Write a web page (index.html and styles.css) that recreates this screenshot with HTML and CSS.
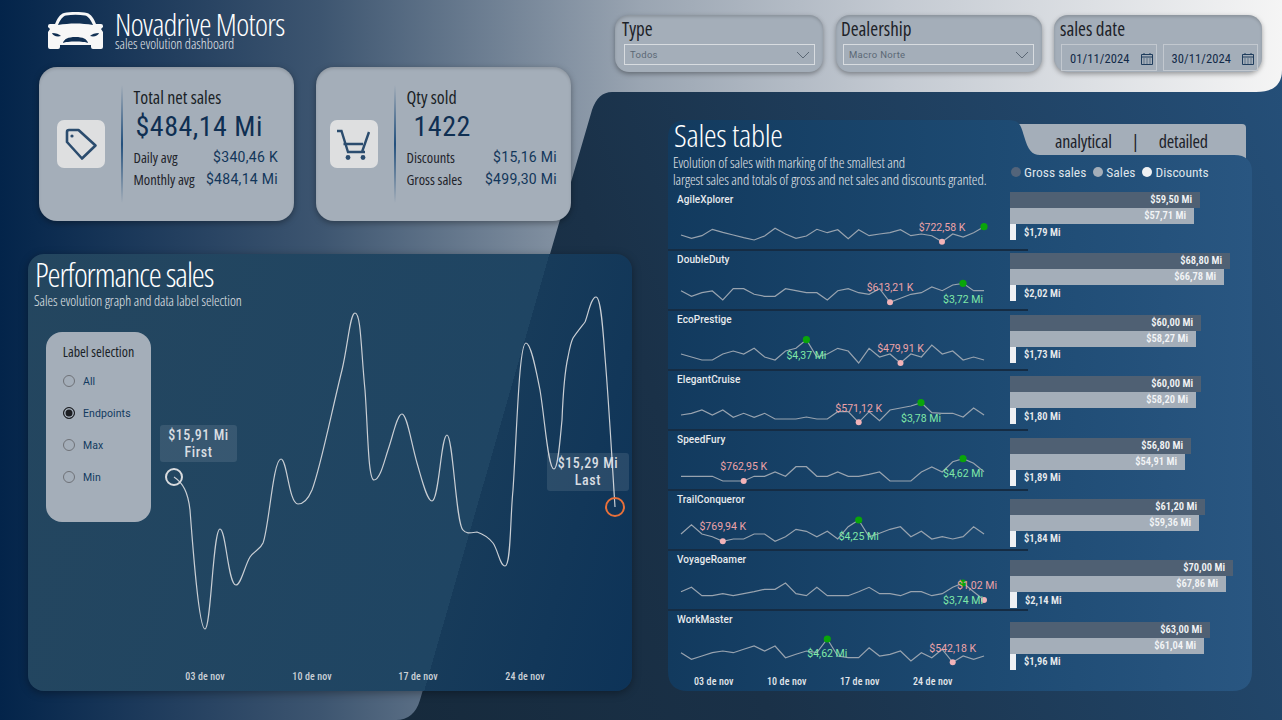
FILE: index.html
```html
<!DOCTYPE html>
<html lang="en">
<head>
  <meta charset="UTF-8">
  <title>Novadrive Motors</title>
  <link rel="stylesheet" href="styles.css">
</head>
<body>
<div class="page">
  <!-- light backdrop with the slanted edge -->
  <svg class="backdrop" width="1282" height="720" viewBox="0 0 1282 720">
    <defs>
      <linearGradient id="lightGrad" x1="0" y1="0" x2="1" y2="0">
        <stop offset="0" stop-color="#03244a"/>
        <stop offset="0.25" stop-color="#3d5570"/>
        <stop offset="0.5" stop-color="#9aa5b2"/>
        <stop offset="0.7" stop-color="#c4cad2"/>
        <stop offset="1" stop-color="#f5f5f5"/>
      </linearGradient>
    </defs>
    <path fill="url(#lightGrad)" d="M0,0 H1282 V70 Q1282,92 1256,92 H612 Q598,92 592,110 L420,700 Q414,720 396,720 H0 Z"/>
  </svg>

  <div class="left">
    <header class="brand">
      <svg class="car" width="55" height="37" viewBox="0 0 55 37">
        <path fill="#f7f7f7" fill-rule="evenodd" d="M16,1 C22,-0.3 33,-0.3 39,1 C43,2 46,7 48,12 L53,12 Q55,12 55,14 V15 L53,17 L55,20 V35 Q55,37 53,37 H45 Q43,37 43,35 V33 H12 V35 Q12,37 10,37 H2 Q0,37 0,35 V20 L2,17 L0,15 V14 Q0,12 2,12 L7,12 C9,7 12,2 16,1 Z M10,13 C12,8 15,4 18,3.5 C24,2.5 31,2.5 37,3.5 C40,4 43,8 45,13 C33,11 22,11 10,13 Z M4,21 C8,21 11,22 13,24 C9,25 5,24 4,21 Z M51,21 C47,21 44,22 42,24 C46,25 50,24 51,21 Z M15,31 C16,27 20,25 27.5,25 C35,25 39,27 40,31 C36,29 19,29 15,31 Z"/>
      </svg>
      <div>
        <h1 class="brand-name">Novadrive Motors</h1>
        <p class="brand-sub">sales evolution dashboard</p>
      </div>
    </header>

    <section class="kpis">
      <div class="kpi">
        <div class="tile tile-tag">
          <svg width="48" height="48" viewBox="0 0 48 48" fill="none" stroke="#2b4c6e" stroke-width="2.6" stroke-linejoin="round">
            <path d="M12,10 H21.5 L38.5,25.5 L25,38.5 L10,22 V12 Q10,10 12,10 Z"/>
            <circle cx="15" cy="16" r="1.6" fill="#2b4c6e" stroke="none"/>
          </svg>
        </div>
        <div class="rule"></div>
        <div class="kpi-text">
          <div class="kpi-title">Total net sales</div>
          <div class="kpi-big">$484,14 Mi</div>
          <div class="kpi-row"><span>Daily avg</span><b>$340,46 K</b></div>
          <div class="kpi-row"><span>Monthly avg</span><b>$484,14 Mi</b></div>
        </div>
      </div>
      <div class="kpi kpi-qty">
        <div class="tile">
          <svg width="48" height="48" viewBox="0 0 48 48" fill="none" stroke="#2b4c6e" stroke-width="2.4">
            <path d="M7,11 H11.5 L18,32 H35 M13.5,24 H33 M39,12 L32,32"/>
            <circle cx="18" cy="37.5" r="2.4" fill="#2b4c6e" stroke="none"/>
            <circle cx="33" cy="37.5" r="2.4" fill="#2b4c6e" stroke="none"/>
          </svg>
        </div>
        <div class="rule"></div>
        <div class="kpi-text">
          <div class="kpi-title">Qty sold</div>
          <div class="kpi-big kpi-big-indent">1422</div>
          <div class="kpi-row"><span>Discounts</span><b>$15,16 Mi</b></div>
          <div class="kpi-row"><span>Gross sales</span><b>$499,30 Mi</b></div>
        </div>
      </div>
    </section>

    <section class="perf">
      <h2 class="perf-title">Performance sales</h2>
      <p class="perf-sub">Sales evolution graph and data label selection</p>
      <div class="perf-body">
        <div class="label-card">
          <div class="label-head">Label selection</div>
          <div class="radio"><i></i>All</div>
          <div class="radio checked"><i></i>Endpoints</div>
          <div class="radio"><i></i>Max</div>
          <div class="radio"><i></i>Min</div>
        </div>
        <div class="chart">
          <svg class="chart-svg" width="476" height="383" viewBox="156 308 476 383">
            <path class="chart-line" d="M174,477 C183,483 188,492 190,510 C193,550 199,629 205,629 C211,629 213,529 220,529 C226,529 228,585 236,585 C241,585 245,565 250,557 C255,550 260,550 263,543 C269,528 273,459 281,459 C287,459 289,504 298,504 C304,504 309,497 312,490 C320,470 332,410 342,370 C348,345 350,313 355,313 C361,313 361,350 365,390 C368,430 368,480 374,480 C380,480 384,462 388,450 C393,436 397,414 402,414 C407,414 411,442 417,463 C422,480 427,501 432,501 C439,501 441,435 447,435 C453,435 456,525 463,530 C466,534 470,533 477,532 C483,534 489,538 493,543 C498,550 500,566 505,566 C511,566 510,520 513,490 C517,430 519,343 526,343 C531,343 536,370 540,390 C545,420 548,469 554,469 C558,469 560,440 562,420 C563,395 565,370 568,357 C570,346 571,342 573,338 C577,332 582,326 585,322 C588,315 591,297 596,297 C601,297 603,330 605,357 C609,405 612,460 615,507"/>
            <circle class="end-first" cx="174" cy="477" r="8"/>
            <circle class="end-last" cx="615" cy="507" r="9"/>
            <text class="chart-date" x="205" y="680">03 de nov</text>
            <text class="chart-date" x="312" y="680">10 de nov</text>
            <text class="chart-date" x="418" y="680">17 de nov</text>
            <text class="chart-date" x="525" y="680">24 de nov</text>
          </svg>
          <div class="point-label point-first">$15,91 Mi<br>First</div>
          <div class="point-label point-last">$15,29 Mi<br>Last</div>
        </div>
      </div>
    </section>
  </div>

  <div class="right">
    <section class="filters">
      <div class="filter filter-type">
        <div class="filter-name">Type</div>
        <div class="select">Todos<svg width="14" height="8" viewBox="0 0 14 8"><polyline points="1,1 7,7 13,1"/></svg></div>
      </div>
      <div class="filter filter-dealer">
        <div class="filter-name">Dealership</div>
        <div class="select">Macro Norte<svg width="14" height="8" viewBox="0 0 14 8"><polyline points="1,1 7,7 13,1"/></svg></div>
      </div>
      <div class="filter filter-date">
        <div class="filter-name">sales date</div>
        <div class="dates">
          <div class="date">01/11/2024<svg width="12" height="12" viewBox="0 0 12 12"><path class="cal" d="M0.5,1.5 H11.5 V11.5 H0.5 Z M0.5,4 H11.5 M2.5,6 H3.5 M5.5,6 H6.5 M8.5,6 H9.5 M2.5,8 H3.5 M5.5,8 H6.5 M8.5,8 H9.5 M2.5,10 H3.5 M5.5,10 H6.5 M8.5,10 H9.5 M3,0 V2 M9,0 V2"/></svg></div>
          <div class="date">30/11/2024<svg width="12" height="12" viewBox="0 0 12 12"><path class="cal" d="M0.5,1.5 H11.5 V11.5 H0.5 Z M0.5,4 H11.5 M2.5,6 H3.5 M5.5,6 H6.5 M8.5,6 H9.5 M2.5,8 H3.5 M5.5,8 H6.5 M8.5,8 H9.5 M2.5,10 H3.5 M5.5,10 H6.5 M8.5,10 H9.5 M3,0 V2 M9,0 V2"/></svg></div>
        </div>
      </div>
    </section>

    <section class="sales-wrap">
      <div class="sales-tab"><span>analytical</span><span>|</span><span>detailed</span></div>
      <div class="sales">
        <div class="sales-head">
          <div class="sales-intro">
            <h2 class="sales-title">Sales table</h2>
            <p class="sales-sub">Evolution of sales with marking of the smallest and<br>largest sales and totals of gross and net sales and discounts granted.</p>
          </div>
          <div class="legend">
            <span class="legend-item"><i class="dot dot-gross"></i>Gross sales</span>
            <span class="legend-item"><i class="dot dot-net"></i>Sales</span>
            <span class="legend-item"><i class="dot dot-disc"></i>Discounts</span>
          </div>
        </div>
        <div class="sales-body">
          <div class="sparks">
            <div class="spark-row">
              <div class="spark-name">AgileXplorer</div>
              <svg class="spark" width="305" height="38" viewBox="0 23 305 38">
                <polyline class="spark-line" transform="scale(10.45 1)" points="0,45 1,48.3 2,45.7 3,39.3 4,42.3 5,45 6,47.7 7,50 8,46 9,38.3 10,44 11,48.3 12,46 13,39.3 14,42.7 15,39.7 16,48.7 17,39.7 18,45.7 19,44 20,42.7 21,39.7 22,45.7 23,44 24,45.7 25,51.7 26,44 27,47 28,42.7 29,36.7"/>
                <circle class="mark-min" cx="261" cy="51.7" r="3"/><circle class="mark-max" cx="303" cy="36.7" r="3.6"/>
                <text class="lab-min" x="261" y="41">$722,58 K</text>
              </svg>
            </div>
            <div class="spark-row">
              <div class="spark-name">DoubleDuty</div>
              <svg class="spark" width="305" height="38" viewBox="0 23 305 38">
                <polyline class="spark-line" transform="scale(10.45 1)" points="0,40.7 1,46.3 2,42.7 3,41 4,50 5,38.7 6,38.7 7,44.3 8,46.3 9,46.3 10,38.7 11,40.7 12,42.7 13,42.7 14,50 15,40.7 16,38.7 17,42.7 18,44.3 19,38.7 20,52.3 21,48.3 22,44.3 23,42.7 24,37 25,40.7 26,35 27,33.3 28,40.7 29,40.7"/>
                <circle class="mark-min" cx="209" cy="52.3" r="3"/><circle class="mark-max" cx="282" cy="33.3" r="3.6"/>
                <text class="lab-min" x="209" y="41.4">$613,21 K</text><text class="lab-max" x="282" y="53.4">$3,72 Mi</text>
              </svg>
            </div>
            <div class="spark-row">
              <div class="spark-name">EcoPrestige</div>
              <svg class="spark" width="305" height="38" viewBox="0 23 305 38">
                <polyline class="spark-line" transform="scale(10.45 1)" points="0,44 1,47 2,50 3,50 4,44 5,41 6,44 7,38.3 8,47 9,50 10,41 11,38.3 12,29.7 13,47 14,44 15,38.3 16,41 17,53 18,38.3 19,47 20,44 21,53 22,44 23,47 24,35 25,44 26,41 27,50 28,47 29,50"/>
                <circle class="mark-min" cx="219.5" cy="53" r="3"/><circle class="mark-max" cx="125.4" cy="29.7" r="3.6"/>
                <text class="lab-min" x="219.5" y="42.4">$479,91 K</text><text class="lab-max" x="125.4" y="49.4">$4,37 Mi</text>
              </svg>
            </div>
            <div class="spark-row">
              <div class="spark-name">ElegantCruise</div>
              <svg class="spark" width="305" height="38" viewBox="0 23 305 38">
                <polyline class="spark-line" transform="scale(10.45 1)" points="0,45 1,43.3 2,40 3,45 4,40 5,47.3 6,43.3 7,47.3 8,43.3 9,49 10,49 11,49 12,47 13,49 14,49 15,41.7 16,41.7 17,52.3 18,41.7 19,50.7 20,40 21,38 22,36 23,32.7 24,42.7 25,43.3 26,43.3 27,47 28,38 29,45"/>
                <circle class="mark-min" cx="177.7" cy="52.3" r="3"/><circle class="mark-max" cx="240" cy="32.7" r="3.6"/>
                <text class="lab-min" x="177.7" y="42">$571,12 K</text><text class="lab-max" x="240" y="52.4">$3,78 Mi</text>
              </svg>
            </div>
            <div class="spark-row">
              <div class="spark-name">SpeedFury</div>
              <svg class="spark" width="305" height="38" viewBox="0 23 305 38">
                <polyline class="spark-line" transform="scale(10.45 1)" points="0,46.3 1,46.3 2,46.3 3,46.3 4,51 5,51 6,51 7,46.3 8,46.3 9,42 10,46.3 11,36.7 12,36.7 13,46.3 14,46.3 15,42 16,46.3 17,46.3 18,44.3 19,42 20,51 21,51 22,51 23,42 24,37 25,42 26,31.7 27,28.7 28,33.3 29,41.7"/>
                <circle class="mark-min" cx="62.7" cy="51" r="3"/><circle class="mark-max" cx="282" cy="28.7" r="3.6"/>
                <text class="lab-min" x="62.7" y="40">$762,95 K</text><text class="lab-max" x="282" y="47.4">$4,62 Mi</text>
              </svg>
            </div>
            <div class="spark-row">
              <div class="spark-name">TrailConqueror</div>
              <svg class="spark" width="305" height="38" viewBox="0 23 305 38">
                <polyline class="spark-line" transform="scale(10.45 1)" points="0,44 1,34.7 2,44 3,46.7 4,51.3 5,49 6,49 7,44 8,44 9,51.3 10,46.7 11,39.3 12,41.3 13,46.7 14,41.3 15,49 16,36.7 17,30 18,46.7 19,43.3 20,39.3 21,36.7 22,46.7 23,41.3 24,49 25,46.7 26,49 27,46.7 28,36.7 29,44"/>
                <circle class="mark-min" cx="41.8" cy="51.3" r="3"/><circle class="mark-max" cx="177.7" cy="30" r="3.6"/>
                <text class="lab-min" x="41.8" y="40.4">$769,94 K</text><text class="lab-max" x="177.7" y="50.4">$4,25 Mi</text>
              </svg>
            </div>
            <div class="spark-row">
              <div class="spark-name">VoyageRoamer</div>
              <svg class="spark" width="305" height="38" viewBox="0 23 305 38">
                <polyline class="spark-line" transform="scale(10.45 1)" points="0,41.7 1,37.3 2,45.7 3,45.7 4,43.7 5,45.7 6,43.7 7,41.7 8,39.3 9,39.3 10,33 11,43.7 12,45.7 13,37.3 14,45.7 15,45.7 16,45.7 17,41.7 18,37.3 19,43.7 20,43.7 21,45.7 22,41.7 23,41.7 24,45.7 25,43.7 26,37.3 27,33 28,41.7 29,50"/>
                <circle class="mark-min" cx="303" cy="50" r="3"/><circle class="mark-max" cx="282" cy="33" r="3.6"/>
                <text class="lab-min" x="296" y="39.4">$1,02 Mi</text><text class="lab-max" x="282" y="53.7">$3,74 Mi</text>
              </svg>
            </div>
            <div class="spark-row">
              <div class="spark-name">WorkMaster</div>
              <svg class="spark" width="305" height="38" viewBox="0 23 305 38">
                <polyline class="spark-line" transform="scale(10.45 1)" points="0,42.7 1,49.3 2,46 3,42.7 4,41 5,42.7 6,39.3 7,36 8,41 9,36 10,47.7 11,44.3 12,41 13,42.7 14,29 15,46 16,47.7 17,47.7 18,37.7 19,46 20,44.3 21,41 22,51 23,42.7 24,47.7 25,39.3 26,52.3 27,46 28,49.3 29,46"/>
                <circle class="mark-min" cx="271.7" cy="52.3" r="3"/><circle class="mark-max" cx="146.3" cy="29" r="3.6"/>
                <text class="lab-min" x="271.7" y="42.4">$542,18 K</text><text class="lab-max" x="146.3" y="47.4">$4,62 Mi</text>
              </svg>
            </div>
            <div class="spark-axis"><span>03 de nov</span><span>10 de nov</span><span>17 de nov</span><span>24 de nov</span></div>
          </div>

          <div class="bars">
            <div class="bar-group">
              <div class="bar bar-gross" style="width:190px">$59,50 Mi</div>
              <div class="bar bar-net" style="width:184px">$57,71 Mi</div>
              <div class="bar-disc"><i style="width:6px"></i>$1,79 Mi</div>
            </div>
            <div class="bar-group">
              <div class="bar bar-gross" style="width:220px">$68,80 Mi</div>
              <div class="bar bar-net" style="width:214px">$66,78 Mi</div>
              <div class="bar-disc"><i style="width:6px"></i>$2,02 Mi</div>
            </div>
            <div class="bar-group">
              <div class="bar bar-gross" style="width:191px">$60,00 Mi</div>
              <div class="bar bar-net" style="width:186px">$58,27 Mi</div>
              <div class="bar-disc"><i style="width:6px"></i>$1,73 Mi</div>
            </div>
            <div class="bar-group">
              <div class="bar bar-gross" style="width:191px">$60,00 Mi</div>
              <div class="bar bar-net" style="width:186px">$58,20 Mi</div>
              <div class="bar-disc"><i style="width:6px"></i>$1,80 Mi</div>
            </div>
            <div class="bar-group">
              <div class="bar bar-gross" style="width:181px">$56,80 Mi</div>
              <div class="bar bar-net" style="width:175px">$54,91 Mi</div>
              <div class="bar-disc"><i style="width:6px"></i>$1,89 Mi</div>
            </div>
            <div class="bar-group">
              <div class="bar bar-gross" style="width:195px">$61,20 Mi</div>
              <div class="bar bar-net" style="width:189px">$59,36 Mi</div>
              <div class="bar-disc"><i style="width:6px"></i>$1,84 Mi</div>
            </div>
            <div class="bar-group">
              <div class="bar bar-gross" style="width:223px">$70,00 Mi</div>
              <div class="bar bar-net" style="width:216px">$67,86 Mi</div>
              <div class="bar-disc"><i style="width:7px"></i>$2,14 Mi</div>
            </div>
            <div class="bar-group">
              <div class="bar bar-gross" style="width:200px">$63,00 Mi</div>
              <div class="bar bar-net" style="width:194px">$61,04 Mi</div>
              <div class="bar-disc"><i style="width:6px"></i>$1,96 Mi</div>
            </div>
          </div>
        </div>
      </div>
    </section>
  </div>
</div>
</body>
</html>
```
FILE: styles.css
```css
* { box-sizing: border-box; }
body {
  margin: 0;
  font-family: Roboto, "Liberation Sans", sans-serif;
}
h1, h2, p { margin: 0; font-weight: 300; }

.page {
  position: relative;
  width: 1282px;
  height: 720px;
  overflow: hidden;
  display: flex;
  background: linear-gradient(70deg, #12222f 0%, #1a3148 50%, #25507a 100%);
}
.backdrop { position: absolute; left: 0; top: 0; }
.left, .right { position: relative; }

/* condensed titles */
.brand-name, .brand-sub, .kpi-title, .kpi-row span, .perf-title, .perf-sub,
.label-head, .filter-name, .sales-title, .sales-sub, .sales-tab {
  font-family: "Open Sans", sans-serif;
  font-stretch: 75%;
  font-weight: 300;
}

/* left column */
.left { width: 632px; padding: 12px 0 0 28px; }
.brand { display: flex; gap: 12px; margin-left: 20px; height: 38px; }
.brand-name {
  font-size: 31px;
  line-height: 24px;
  letter-spacing: -0.65px;
  color: #fff;
}
.brand-sub {
  font-size: 14px;
  line-height: 12px;
  margin-top: 2px;
  color: #e4e8ec;
}

.kpis { display: flex; gap: 22px; margin: 17px 0 0 11px; }
.kpi {
  display: flex;
  width: 255px;
  height: 154px;
  padding: 18px 16px 0 18px;
  background: #a4aeb9;
  border-radius: 18px;
  box-shadow: 0 2px 6px rgba(0, 0, 0, 0.35), inset 0 2px 3px rgba(0, 0, 0, 0.12);
}
.kpi-qty { padding-left: 14px; padding-right: 14px; }
.tile {
  width: 48px;
  height: 48px;
  margin-top: 35px;
  background: #dedfe0;
  border-radius: 7px;
}
.tile svg { display: block; }
.rule {
  width: 1.5px;
  height: 118px;
  margin: 0 11px 0 16px;
  background: linear-gradient(180deg, rgba(35, 80, 125, 0), #23507d 50%, rgba(35, 80, 125, 0));
}
.kpi-text { flex: 1; margin-top: 1px; }
.kpi-title { font-size: 18px; line-height: 22px; font-weight: 400; color: #1a1f26; }
.kpi-big {
  font-size: 28px;
  font-stretch: 85%;
  line-height: 36px;
  margin: 1px 0 1px 2px;
  letter-spacing: 0.5px;
  color: #0f2f52;
}
.kpi-big-indent { margin-left: 7px; }
.kpi-row {
  display: flex;
  justify-content: space-between;
  align-items: center;
  height: 22px;
}
.kpi-row span { font-size: 14.5px; font-weight: 400; color: #1f242b; }
.kpi-row b { font-size: 14px; font-weight: 400; letter-spacing: 0.3px; color: #12365a; }

.perf {
  width: 604px;
  height: 437px;
  margin-top: 33px;
  padding: 2px 0 0 7px;
  border-radius: 16px;
  background: linear-gradient(106deg, #24465f 0%, #1f4563 71.5%, #173b5a 71.5%, #0d3358 100%);
  box-shadow: 0 2px 8px rgba(0, 0, 0, 0.35);
}
.perf-title { font-size: 33px; line-height: 38px; letter-spacing: -1.1px; color: #fff; }
.perf-sub { font-size: 14px; line-height: 14px; margin-left: -1px; color: #e2e6ea; }
.perf-body { display: flex; margin-left: -7px; padding-left: 18px; }
.label-card {
  width: 105px;
  height: 190px;
  margin-top: 24px;
  padding-top: 10px;
  background: #a4aeb9;
  border-radius: 16px;
}
.label-head {
  text-align: center;
  font-size: 14px;
  line-height: 20px;
  font-weight: 400;
  color: #1a1f26;
  margin-bottom: 3px;
}
.radio {
  display: flex;
  align-items: center;
  gap: 8px;
  height: 32px;
  padding-left: 17px;
  font-size: 10.5px;
  letter-spacing: 0.1px;
  color: #123a60;
}
.radio i {
  width: 12px;
  height: 12px;
  border: 1px solid #6f7278;
  border-radius: 50%;
}
.radio.checked i {
  background: #1c1e22;
  border-color: #1c1e22;
  box-shadow: inset 0 0 0 1.5px #a4aeb9;
}
.chart { position: relative; width: 476px; height: 383px; margin-left: 5px; }
.chart-svg { display: block; overflow: visible; }
.chart-line { fill: none; stroke: #c9ced4; stroke-width: 1.2; }
.end-first { fill: none; stroke: #d9dbde; stroke-width: 2; }
.end-last { fill: none; stroke: #e8703a; stroke-width: 2; }
.chart-date {
  font-size: 10px;
  font-stretch: 85%;
  font-weight: 500;
  letter-spacing: 0.1px;
  text-anchor: middle;
  fill: #ccd1d7;
}
.point-label {
  position: absolute;
  text-align: center;
  font-size: 14px;
  font-weight: 500;
  font-stretch: 85%;
  line-height: 17px;
  letter-spacing: 0.6px;
  color: #d8dde2;
  padding-top: 2px;
  border-radius: 3px;
  background: rgba(255, 255, 255, 0.1);
}
.point-first { left: 4px; top: 117px; width: 77px; height: 37px; }
.point-last { left: 391px; top: 145px; width: 82px; height: 38px; }

/* right column */
.right { width: 650px; padding-top: 15px; }
.filters { display: flex; margin-left: -17px; }
.filter {
  height: 57px;
  background: #a4aeb9;
  border-radius: 14px;
  box-shadow: 0 2px 5px rgba(0, 0, 0, 0.35), inset 0 2px 3px rgba(0, 0, 0, 0.15);
}
.filter-type { width: 208px; padding: 0 8px 0 7px; }
.filter-dealer { width: 206px; margin-left: 13px; padding: 0 8px 0 5px; }
.filter-date { width: 208px; margin-left: 12px; padding: 0 4px 0 6px; }
.filter-name { font-size: 19px; line-height: 28px; font-weight: 400; color: #1d2228; }
.select {
  display: flex;
  justify-content: space-between;
  align-items: center;
  height: 21px;
  margin: 1px 0 0 2px;
  padding: 0 4px 0 5px;
  border: 1.5px solid #d8dce0;
  font-size: 9.5px;
  letter-spacing: 0.3px;
  color: #5b6875;
}
.select polyline { fill: none; stroke: #5b6875; stroke-width: 1; }
.dates { display: flex; gap: 6px; margin-top: 1px; margin-left: 1px; }
.date {
  display: flex;
  justify-content: space-between;
  align-items: center;
  width: 96px;
  height: 27px;
  padding: 2px 3px 0 8px;
  border: 1.5px solid #c2c8cf;
  font-size: 12.5px;
  font-stretch: 85%;
  letter-spacing: 0.1px;
  color: #122a48;
}
.cal { fill: none; stroke: #1f3d5d; stroke-width: 1; }

.sales-wrap { position: relative; width: 584px; height: 571px; margin: 48px 0 0 36px; }
.sales-tab {
  position: absolute;
  left: 340px;
  top: 4px;
  width: 238px;
  height: 50px;
  padding: 2px 0 0 47px;
  display: flex;
  gap: 20px;
  font-size: 18px;
  line-height: 30px;
  font-weight: 400;
  letter-spacing: -0.2px;
  color: #1c2229;
  background: #a4aeb9;
  border-radius: 8px 4px 0 0;
}
.sales {
  position: relative;
  width: 584px;
  height: 571px;
  background: linear-gradient(90deg, #123a5e 0%, #1d4a72 55%, #295681 100%);
  clip-path: path("M18,0 H340 C352,0 353,6 356,16 C360,30 364,35 372,35 H566 C578,35 584,41 584,52 V551 Q584,571 564,571 H20 Q0,571 0,551 V18 Q0,0 18,0 Z");
}
.sales-head { display: flex; height: 71px; padding-left: 6px; }
.sales-intro { width: 337px; }
.sales-title { font-size: 32px; line-height: 30px; color: #fff; letter-spacing: -0.3px; }
.sales-sub { font-size: 14.5px; line-height: 17px; margin-top: 4px; margin-left: -1px; color: #e2e6ea; letter-spacing: -0.1px; white-space: nowrap; }
.legend { display: flex; gap: 7px; margin-top: 43px; height: 18px; color: #dfe4ea; font-size: 13.5px; font-stretch: 85%; line-height: 18px; }
.legend-item { display: flex; align-items: center; gap: 3px; }
.dot { width: 10px; height: 10px; border-radius: 50%; }
.dot-gross { background: #53647a; }
.dot-net { background: #a4aeb9; }
.dot-disc { background: #f0f1f3; }

.sales-body { display: flex; }
.sparks { width: 342px; flex: none; }
.spark-row {
  width: 360px;
  height: 60px;
  border-bottom: 2px solid #152c44;
  padding: 0 0 0 9px;
}
.spark-row:nth-last-child(2) { border-bottom: 0; }
.spark-name {
  height: 22px;
  padding-top: 1px;
  font-size: 10px;
  line-height: 16px;
  font-weight: 500;
  letter-spacing: 0.1px;
  color: #e8ebee;
}
.spark { display: block; margin-left: 4px; overflow: visible; }
.spark-line { fill: none; stroke: #98a3af; stroke-width: 1.2; vector-effect: non-scaling-stroke; }
.mark-min { fill: #f2b3b8; }
.mark-max { fill: #0aa50a; }
.lab-min, .lab-max { font-size: 10.5px; text-anchor: middle; }
.lab-min { fill: #eea3a8; }
.lab-max { fill: #7fe8a8; }
.spark-axis { display: flex; padding: 2px 0 0 26px; }
.spark-axis span {
  width: 73px;
  font-size: 10px;
  font-stretch: 85%;
  letter-spacing: 0.1px;
  line-height: 18px;
  font-weight: 500;
  color: #e4e8ec;
}

.bars { padding-top: 1px; }
.bar-group { height: 48px; margin-bottom: 13.4px; }
.bar {
  height: 16px;
  padding-right: 8px;
  text-align: right;
  font-size: 10.5px;
  font-stretch: 80%;
  line-height: 16px;
  font-weight: 600;
  color: #f2f4f6;
}
.bar-gross { background: #4f6073; }
.bar-net { background: #a4aeb9; }
.bar-disc {
  display: flex;
  align-items: center;
  gap: 8px;
  height: 16px;
  font-size: 10.5px;
  font-stretch: 80%;
  font-weight: 600;
  color: #e8ebee;
}
.bar-disc i { height: 16px; background: #eef0f3; }
```
